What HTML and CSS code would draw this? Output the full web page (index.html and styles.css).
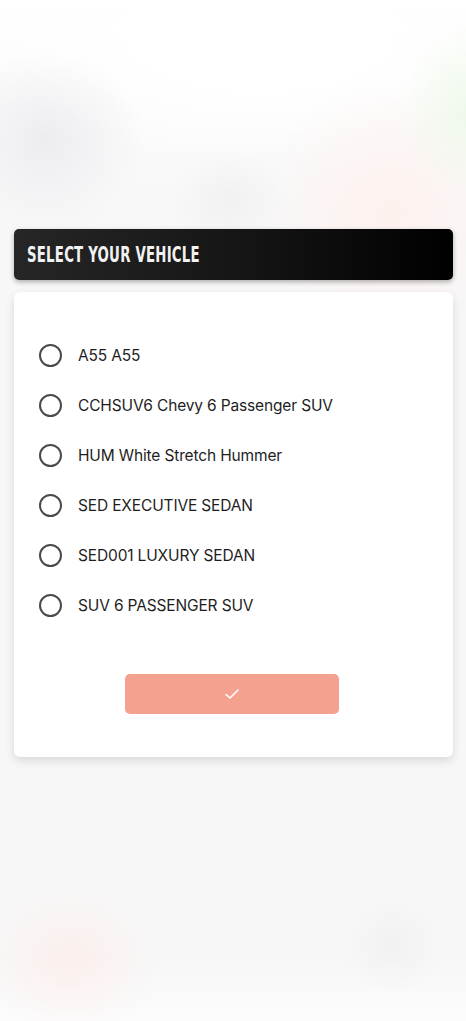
FILE: index.html
```html
<!DOCTYPE html>
<html lang="en">
<head>
<meta charset="utf-8">
<link rel="stylesheet" href="styles.css">
<title>Select your vehicle</title>
</head>
<body>
<div class="screen">
  <div class="status"><span class="time">10:28</span></div>
  <div class="content">
    <div class="header"><h1 class="title">SELECT YOUR VEHICLE</h1></div>
    <div class="card">
      <ul class="options">
        <li class="option"><span class="radio"></span><span class="label">A55 A55</span></li>
        <li class="option"><span class="radio"></span><span class="label">CCHSUV6 Chevy 6 Passenger SUV</span></li>
        <li class="option"><span class="radio"></span><span class="label">HUM White Stretch Hummer</span></li>
        <li class="option"><span class="radio"></span><span class="label">SED EXECUTIVE SEDAN</span></li>
        <li class="option"><span class="radio"></span><span class="label">SED001 LUXURY SEDAN</span></li>
        <li class="option"><span class="radio"></span><span class="label">SUV 6 PASSENGER SUV</span></li>
      </ul>
      <div class="actions">
        <button class="confirm" type="button">
          <svg width="16" height="12" viewBox="0 0 16 12"><path d="M2 6.5 L6 10 L14 2" fill="none" stroke="#fff" stroke-width="1.6" stroke-linecap="round" stroke-linejoin="round"/></svg>
        </button>
      </div>
    </div>
  </div>
</div>
</body>
</html>
```
FILE: styles.css
```css
html, body {
  margin: 0;
  padding: 0;
}
body {
  width: 466px;
  height: 1021px;
  overflow: hidden;
  font-family: Inter, Roboto, "Liberation Sans", sans-serif;
  background-color: #f7f7f8;
  background-image:
    radial-gradient(ellipse 90px 80px at 70px 960px, rgba(255, 232, 225, 0.5), rgba(255,232,225,0) 100%),
    radial-gradient(ellipse 50px 50px at 393px 945px, rgba(240, 238, 240, 0.7), rgba(240,238,240,0) 100%),
    radial-gradient(ellipse 100px 90px at 45px 140px, rgba(232, 232, 236, 0.75), rgba(232,232,236,0) 100%),
    radial-gradient(ellipse 60px 50px at 230px 200px, rgba(238, 238, 240, 0.7), rgba(238,238,240,0) 100%),
    radial-gradient(ellipse 70px 90px at 470px 110px, rgba(235, 248, 230, 0.8), rgba(235,248,230,0) 100%),
    radial-gradient(ellipse 130px 130px at 390px 210px, rgba(255, 240, 236, 0.85), rgba(255,240,236,0) 100%),
    radial-gradient(ellipse 280px 120px at 260px 40px, #ffffff 40%, rgba(255,255,255,0) 100%),
    linear-gradient(#ffffff 0, #f7f7f8 230px, #f7f7f8 960px, #fcfcfd 1021px);
}
.screen {
  display: flex;
  flex-direction: column;
  height: 100%;
}
.status {
  height: 36px;
  padding: 36px 0 0 30px;
}
.time {
  color: rgba(255, 255, 255, 0.9);
  font-size: 16px;
  font-weight: 600;
}
.content {
  padding: 157px 13px 0 14px;
  display: flex;
  flex-direction: column;
  gap: 12px;
}
.header {
  height: 51px;
  border-radius: 5px;
  background: linear-gradient(90deg, #262626 0%, #161616 50%, #000 100%);
  box-shadow: 0 2px 5px rgba(0, 0, 0, 0.3);
  display: flex;
  align-items: center;
  padding-left: 13px;
}
.title {
  margin: 0;
  color: #f2f2f2;
  font-family: "DejaVu Sans Condensed", "DejaVu Sans", sans-serif;
  font-weight: bold;
  font-size: 21px;
  letter-spacing: 0.3px;
  transform: scaleX(0.705);
  transform-origin: left center;
  white-space: nowrap;
}
.card {
  background: #fff;
  border-radius: 6px;
  box-shadow: 0 4px 10px rgba(0, 0, 0, 0.12);
  padding: 52px 0 43px 25px;
  height: 465px;
  box-sizing: border-box;
}
.options {
  list-style: none;
  margin: 0;
  padding: 0;
  display: flex;
  flex-direction: column;
  gap: 27px;
}
.option {
  display: flex;
  align-items: center;
  gap: 16px;
  height: 23px;
}
.radio {
  width: 19px;
  height: 19px;
  border: 2px solid #4a4a4a;
  border-radius: 50%;
  flex: none;
}
.label {
  font-size: 15.5px;
  color: #1e1e1e;
  letter-spacing: -0.15px;
}
.actions {
  display: flex;
  justify-content: center;
  padding-right: 28px;
  margin-top: 57px;
}
.confirm {
  width: 214px;
  height: 40px;
  border: none;
  border-radius: 5px;
  background: #f5a190;
  display: flex;
  align-items: center;
  justify-content: center;
  padding: 0;
}
```
